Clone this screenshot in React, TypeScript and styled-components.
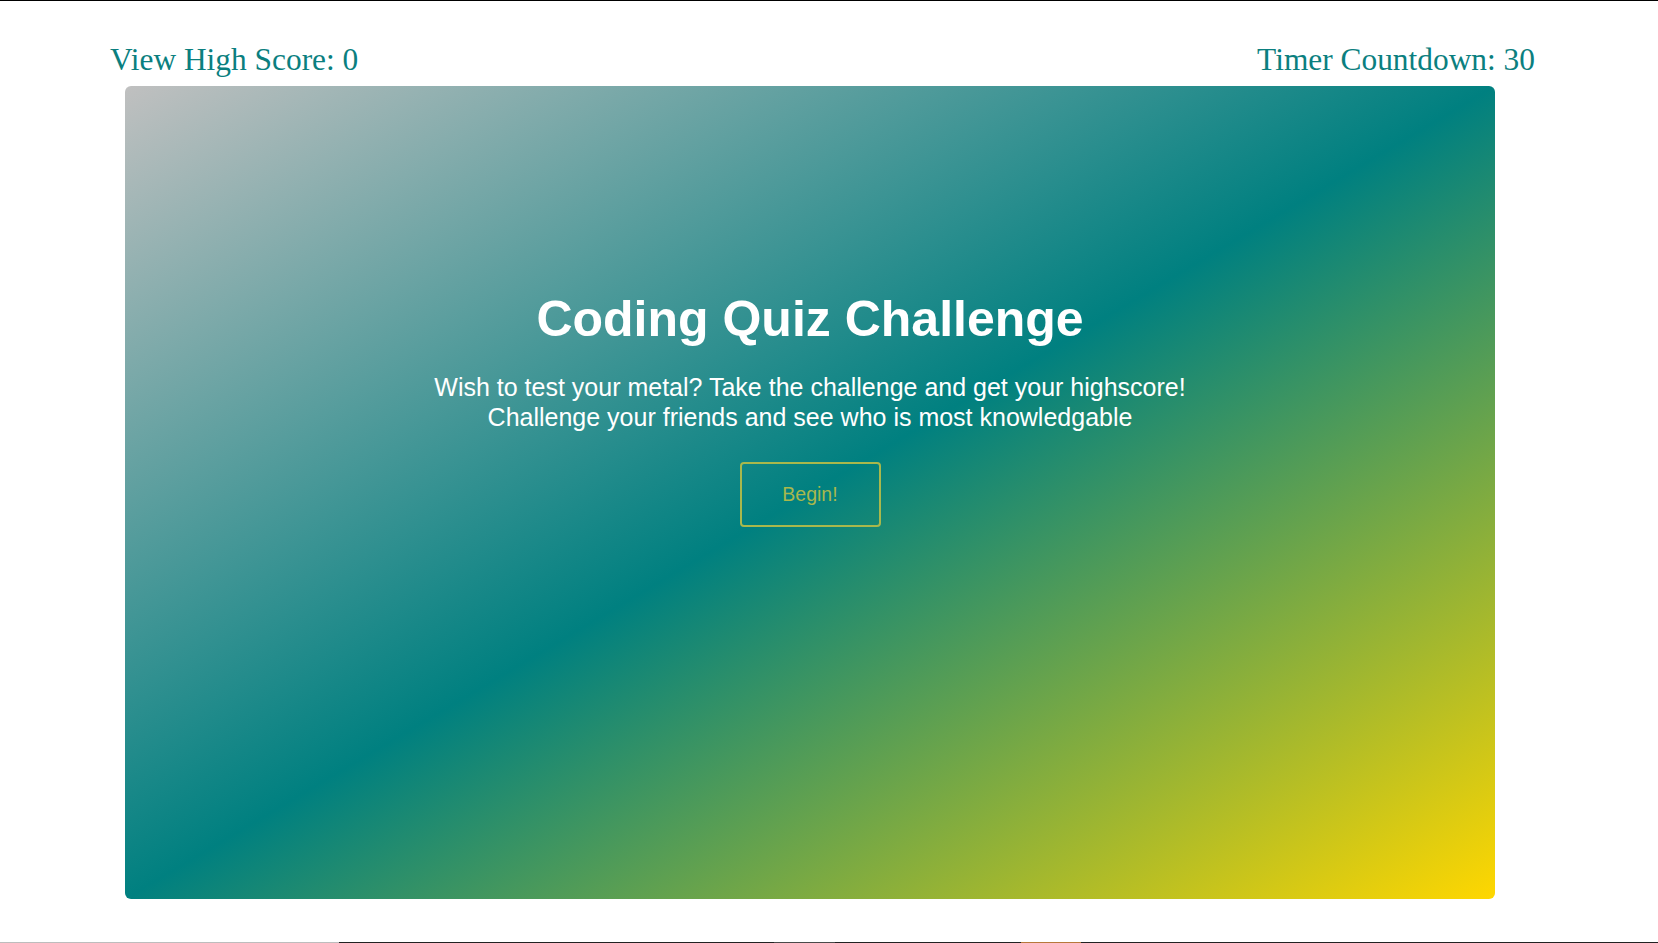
import React from "react";
import styled, { createGlobalStyle } from "styled-components";

const GlobalStyle = createGlobalStyle`
  html, body {
    margin: 0;
    padding: 0;
    background: #ffffff;
  }
  * {
    box-sizing: border-box;
  }
`;

const Page = styled.div`
  min-height: 100vh;
  display: flex;
  flex-direction: column;
  border-top: 1px solid #000;
`;

const Header = styled.header`
  display: flex;
  justify-content: space-between;
  padding: 41.5px 123px 0 110px;
  font-family: "Liberation Serif", "Times New Roman", serif;
  font-size: 31.4px;
  line-height: 34px;
  color: #0b7f7f;
`;

const HeaderItem = styled.span`
  white-space: nowrap;
`;

const Card = styled.main`
  margin: 9.5px 0 0 125px;
  width: 1370px;
  height: 813px;
  border-radius: 6px;
  background: linear-gradient(to bottom right, silver, teal, gold);
  display: flex;
  flex-direction: column;
  align-items: center;
  padding-top: 204.5px;
  color: #ffffff;
  font-family: "Liberation Sans", Arial, sans-serif;
`;

const Title = styled.h1`
  margin: 0;
  font-size: 50px;
  line-height: 56px;
  font-weight: 700;
`;

const Intro = styled.p`
  margin: 26.5px 0 0;
  font-size: 25px;
  line-height: 29.6px;
  text-align: center;
`;

const BeginButton = styled.button`
  margin-top: 29.5px;
  width: 141px;
  height: 65px;
  border: 2px solid #a9b84c;
  border-radius: 4px;
  background: transparent;
  color: #a9b84c;
  font-family: "Liberation Sans", Arial, sans-serif;
  font-size: 19.5px;
  cursor: pointer;
`;

const Footer = styled.div`
  margin-top: auto;
  height: 1px;
  display: flex;
`;

const Strip = styled.div<{ $w?: number; $c: string }>`
  height: 1px;
  background: ${(p) => p.$c};
  ${(p) => (p.$w ? `width: ${p.$w}px; flex: none;` : "flex: 1;")}
`;

export default function App() {
  return (
    <>
      <GlobalStyle />
      <Page>
        <Header>
          <HeaderItem>View High Score: 0</HeaderItem>
          <HeaderItem>Timer Countdown: 30</HeaderItem>
        </Header>
        <Card>
          <Title>Coding Quiz Challenge</Title>
          <Intro>
            Wish to test your metal? Take the challenge and get your highscore!
            <br />
            Challenge your friends and see who is most knowledgable
          </Intro>
          <BeginButton>Begin!</BeginButton>
        </Card>
        <Footer>
          <Strip $w={339} $c="#bdbdbd" />
          <Strip $w={435} $c="#222222" />
          <Strip $w={61} $c="#4a4a4a" />
          <Strip $w={186} $c="#222222" />
          <Strip $w={60} $c="#b7783a" />
          <Strip $c="#222222" />
        </Footer>
      </Page>
    </>
  );
}
